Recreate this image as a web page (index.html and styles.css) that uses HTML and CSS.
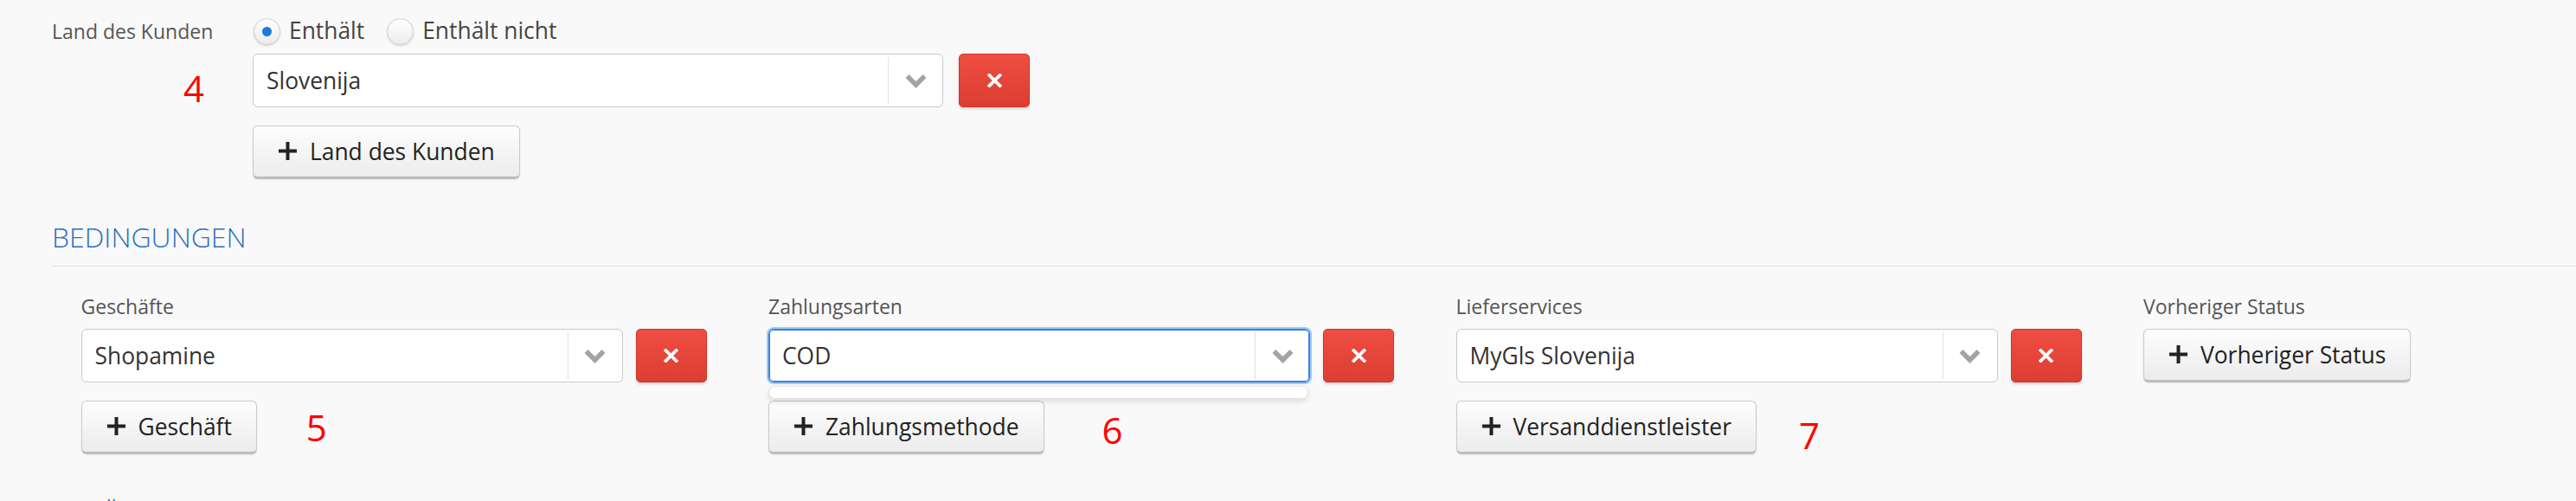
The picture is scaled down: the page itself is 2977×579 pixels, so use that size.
FILE: index.html
```html
<!DOCTYPE html>
<html lang="de">
<head>
<meta charset="utf-8">
<title>Bedingungen</title>
<link rel="stylesheet" href="styles.css">
</head>
<body>
<div class="page">
  <div class="form-row">
    <div class="label-col">
      <div class="field-label">Land des Kunden</div>
      <div class="marker marker-4">4</div>
    </div>
    <div class="control-col">
      <div class="radios">
        <label class="radio"><span class="radio-circle is-checked"></span><span class="radio-text">Enthält</span></label>
        <label class="radio"><span class="radio-circle"></span><span class="radio-text">Enthält nicht</span></label>
      </div>
      <div class="select-row select-row-wide">
        <div class="select select-wide">
          <span class="select-value">Slovenija</span>
          <span class="select-arrow"><svg width="25" height="17" viewBox="0 0 25 17"><polyline points="2.5,3 12.5,13 22.5,3" fill="none" stroke="#a3a3a3" stroke-width="5.5"/></svg></span>
        </div>
        <button class="btn-remove"><svg width="17" height="16" viewBox="0 0 17 16"><path d="M2.5 2 L14.5 14 M14.5 2 L2.5 14" stroke="#fff" stroke-width="3.8" stroke-linecap="square"/></svg></button>
      </div>
      <div class="add-row">
        <button class="btn-add"><svg class="plus" width="21" height="21" viewBox="0 0 21 21"><rect x="8.5" y="0" width="4" height="21" fill="#222"/><rect x="0" y="8.5" width="21" height="4" fill="#222"/></svg>Land des Kunden</button>
      </div>
    </div>
  </div>

  <h3 class="section-title">Bedingungen</h3>

  <div class="cond-grid">
    <div class="cond-col">
      <div class="col-label">Geschäfte</div>
      <div class="select-row">
        <div class="select">
          <span class="select-value">Shopamine</span>
          <span class="select-arrow"><svg width="25" height="17" viewBox="0 0 25 17"><polyline points="2.5,3 12.5,13 22.5,3" fill="none" stroke="#a3a3a3" stroke-width="5.5"/></svg></span>
        </div>
        <button class="btn-remove"><svg width="17" height="16" viewBox="0 0 17 16"><path d="M2.5 2 L14.5 14 M14.5 2 L2.5 14" stroke="#fff" stroke-width="3.8" stroke-linecap="square"/></svg></button>
      </div>
      <div class="add-row">
        <button class="btn-add"><svg class="plus" width="21" height="21" viewBox="0 0 21 21"><rect x="8.5" y="0" width="4" height="21" fill="#222"/><rect x="0" y="8.5" width="21" height="4" fill="#222"/></svg>Geschäft</button>
        <span class="marker marker-5">5</span>
      </div>
    </div>

    <div class="cond-col">
      <div class="col-label">Zahlungsarten</div>
      <div class="select-row">
        <div class="select is-focused">
          <span class="select-value">COD</span>
          <span class="select-arrow"><svg width="25" height="17" viewBox="0 0 25 17"><polyline points="2.5,3 12.5,13 22.5,3" fill="none" stroke="#a3a3a3" stroke-width="5.5"/></svg></span>
          <div class="select-menu"></div>
        </div>
        <button class="btn-remove"><svg width="17" height="16" viewBox="0 0 17 16"><path d="M2.5 2 L14.5 14 M14.5 2 L2.5 14" stroke="#fff" stroke-width="3.8" stroke-linecap="square"/></svg></button>
      </div>
      <div class="add-row">
        <button class="btn-add"><svg class="plus" width="21" height="21" viewBox="0 0 21 21"><rect x="8.5" y="0" width="4" height="21" fill="#222"/><rect x="0" y="8.5" width="21" height="4" fill="#222"/></svg>Zahlungsmethode</button>
        <span class="marker marker-6">6</span>
      </div>
    </div>

    <div class="cond-col">
      <div class="col-label">Lieferservices</div>
      <div class="select-row">
        <div class="select">
          <span class="select-value">MyGls Slovenija</span>
          <span class="select-arrow"><svg width="25" height="17" viewBox="0 0 25 17"><polyline points="2.5,3 12.5,13 22.5,3" fill="none" stroke="#a3a3a3" stroke-width="5.5"/></svg></span>
        </div>
        <button class="btn-remove"><svg width="17" height="16" viewBox="0 0 17 16"><path d="M2.5 2 L14.5 14 M14.5 2 L2.5 14" stroke="#fff" stroke-width="3.8" stroke-linecap="square"/></svg></button>
      </div>
      <div class="add-row">
        <button class="btn-add"><svg class="plus" width="21" height="21" viewBox="0 0 21 21"><rect x="8.5" y="0" width="4" height="21" fill="#222"/><rect x="0" y="8.5" width="21" height="4" fill="#222"/></svg>Versanddienstleister</button>
        <span class="marker marker-7">7</span>
      </div>
    </div>

    <div class="cond-col">
      <div class="col-label">Vorheriger Status</div>
      <div class="select-row">
        <button class="btn-add btn-add-top"><svg class="plus" width="21" height="21" viewBox="0 0 21 21"><rect x="8.5" y="0" width="4" height="21" fill="#222"/><rect x="0" y="8.5" width="21" height="4" fill="#222"/></svg>Vorheriger Status</button>
      </div>
    </div>
  </div>

  <h3 class="section-title section-next">Zusätzliche Aktionen</h3>
</div>
</body>
</html>
```

FILE: styles.css
```css
* {
  box-sizing: border-box;
}

html {
  overflow: hidden;
  background: #f9f9f9;
}

body {
  margin: 0;
  background: #f9f9f9;
  font-family: "Open Sans", "Liberation Sans", sans-serif;
  color: #333;
}

.page {
  padding: 15px 0 0 60px;
}

/* top form row */
.form-row {
  display: flex;
}

.label-col {
  width: 232px;
  flex: none;
}

.field-label {
  font-size: 23px;
  line-height: 42px;
  color: #555;
}

.control-col {
  display: flex;
  flex-direction: column;
}

.radios {
  display: flex;
  align-items: center;
  height: 42px;
  padding-left: 1px;
}

.radio {
  display: flex;
  align-items: center;
  margin-right: 26px;
}

.radio-circle {
  width: 31px;
  height: 31px;
  border-radius: 50%;
  border: 1px solid #cfcfcf;
  background: linear-gradient(#ffffff, #ececec);
  box-shadow: 0 1px 2px rgba(0, 0, 0, 0.18);
  display: flex;
  align-items: center;
  justify-content: center;
  margin-right: 10px;
}

.radio-circle.is-checked::after {
  content: "";
  width: 11px;
  height: 11px;
  border-radius: 50%;
  background: #1f7ae0;
}

.radio-text {
  font-size: 26.4px;
  line-height: 42px;
  color: #444;
  position: relative;
  top: -1px;
}

/* selects */
.select-row {
  display: flex;
  gap: 15px;
  height: 62px;
}

.select-row-wide {
  margin-top: 5px;
  gap: 18px;
}

.select {
  position: relative;
  width: 626px;
  height: 62px;
  display: flex;
  align-items: stretch;
  background: #fff;
  border: 1px solid #c9c9c9;
  border-radius: 6px;
}

.select-wide {
  width: 798px;
}

.select.is-focused {
  border-color: #2f84e3;
  box-shadow: inset 0 0 0 1px #2f84e3, 0 0 0 2px #a3caf4;
}

.select-value {
  flex: 1;
  display: flex;
  align-items: center;
  padding-left: 15px;
  font-size: 26.4px;
  color: #333;
}

.select-arrow {
  width: 63px;
  flex: none;
  display: flex;
  align-items: center;
  justify-content: center;
  border-left: 1px solid #e2e2e2;
  margin: 3px 0;
}

.select-menu {
  position: absolute;
  left: -1px;
  right: 1px;
  top: calc(100% + 5px);
  height: 15px;
  background: #fff;
  border: 1px solid #e3e3e3;
  border-radius: 8px;
  box-shadow: 0 3px 6px rgba(0, 0, 0, 0.12);
  z-index: 2;
}

/* buttons */
.btn-remove {
  width: 82px;
  height: 62px;
  flex: none;
  display: flex;
  align-items: center;
  justify-content: center;
  padding: 0;
  border: 1px solid #c8382d;
  border-radius: 5px;
  background: linear-gradient(#ef4e42, #dc3e31);
  box-shadow: 0 2px 3px rgba(0, 0, 0, 0.15);
}

.add-row {
  display: flex;
  align-items: flex-start;
  margin-top: 21px;
}

.btn-add {
  height: 62px;
  display: flex;
  align-items: center;
  padding: 0 28px 1px 29px;
  font-family: "Open Sans", "Liberation Sans", sans-serif;
  font-size: 26.4px;
  color: #222;
  background: linear-gradient(#fdfdfd, #ececec);
  border: 1px solid #cacaca;
  border-bottom: 3px solid #bdbdbd;
  border-radius: 6px;
  box-shadow: 0 1px 2px rgba(0, 0, 0, 0.08);
}

.btn-add .plus {
  margin-right: 15px;
  flex: none;
}

/* section heading */
.section-title {
  margin: 49px 0 0 0;
  padding-bottom: 15px;
  font-size: 32px;
  line-height: 36px;
  font-weight: 300;
  text-transform: uppercase;
  color: #2a70c0;
  border-bottom: 1px solid #dcdcdc;
}

.section-next {
  margin-top: 50px;
  border-bottom: none;
}

/* condition columns */
.cond-grid {
  display: grid;
  grid-template-columns: repeat(4, 794.5px);
  margin-top: 30px;
  padding-left: 33.5px;
}

.col-label {
  font-size: 23px;
  line-height: 33px;
  color: #555;
  margin-bottom: 9px;
}

/* red annotation numbers */
.marker {
  display: block;
  font-size: 42px;
  line-height: 42px;
  color: #ff0000;
}

.marker-4 {
  margin: 24px 0 0 152px;
}

.marker-5 {
  margin: 10px 0 0 57px;
}

.marker-6 {
  margin: 13px 0 0 67px;
}

.marker-7 {
  margin: 19px 0 0 49px;
}
```
